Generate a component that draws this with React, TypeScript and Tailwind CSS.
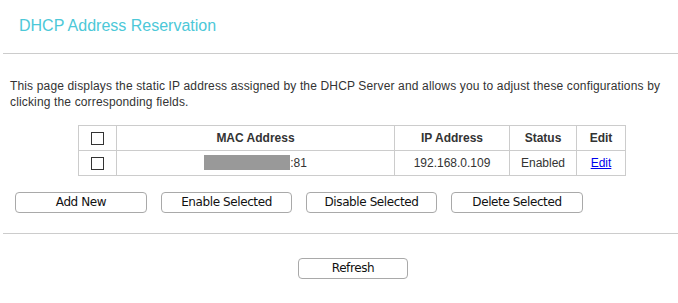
import React from 'react';

const rows = [
  { mac: ':81', ip: '192.168.0.109', status: 'Enabled' },
];

function CheckBox() {
  return <span className="inline-block w-[13px] h-[13px] border border-[#333333] bg-white align-middle" />;
}

function Btn({ label, w }: { label: string; w: string }) {
  return (
    <button
      className={`${w} h-[21px] rounded-[4px] border border-[#a9a9a9] bg-white text-[12px] leading-[19px] tracking-[-0.4px] text-[#111111] font-['DejaVu_Sans',Tahoma,sans-serif]`}
    >
      {label}
    </button>
  );
}

export default function App() {
  return (
    <div className="w-[678px] h-[303px] bg-white font-['Liberation_Sans',Arial,sans-serif] overflow-hidden">
      {/* Title */}
      <h1 className="pl-[19px] pt-[17px] text-[16px] leading-[18px] text-[#4cc8d8]">DHCP Address Reservation</h1>
      <div className="ml-[3px] mt-[18px] border-t border-[#cccccc]" />

      <p className="mt-[24px] px-[10px] text-[12px] leading-[16px] tracking-[0.15px] text-[#333333]">
        This page displays the static IP address assigned by the DHCP Server and allows you to adjust these configurations by
        clicking the corresponding fields.
      </p>

      {/* Reservation table */}
      <table className="ml-[78px] mt-[15px] w-[547px] table-fixed border-collapse text-[12px] text-[#333333]">
        <colgroup>
          <col className="w-[38px]" />
          <col className="w-[278px]" />
          <col className="w-[115px]" />
          <col className="w-[67px]" />
          <col className="w-[49px]" />
        </colgroup>
        <thead>
          <tr className="h-[25px]">
            <th className="border border-[#cccccc] p-0 text-center"><CheckBox /></th>
            <th className="border border-[#cccccc] p-0 text-center font-bold">MAC Address</th>
            <th className="border border-[#cccccc] p-0 text-center font-bold">IP Address</th>
            <th className="border border-[#cccccc] p-0 text-center font-bold">Status</th>
            <th className="border border-[#cccccc] p-0 text-center font-bold">Edit</th>
          </tr>
        </thead>
        <tbody>
          {rows.map((r) => (
            <tr key={r.ip} className="h-[25px]">
              <td className="border border-[#cccccc] p-0 text-center"><CheckBox /></td>
              <td className="border border-[#cccccc] p-0 text-center">
                <span className="inline-block w-[86px] h-[15px] bg-[#999999] align-middle -mt-[2px]" />
                <span>{r.mac}</span>
              </td>
              <td className="border border-[#cccccc] p-0 text-center">{r.ip}</td>
              <td className="border border-[#cccccc] p-0 text-center">{r.status}</td>
              <td className="border border-[#cccccc] p-0 text-center">
                <a href="#" className="text-[#0000ee] underline">Edit</a>
              </td>
            </tr>
          ))}
        </tbody>
      </table>

      {/* Actions */}
      <div className="ml-[15px] mt-[16px] flex gap-[14px]">
        <Btn label="Add New" w="w-[132px]" />
        <Btn label="Enable Selected" w="w-[131px]" />
        <Btn label="Disable Selected" w="w-[131px]" />
        <Btn label="Delete Selected" w="w-[132px]" />
      </div>

      <div className="ml-[3px] mt-[20px] border-t border-[#cccccc]" />

      <div className="ml-[298px] mt-[24px] flex">
        <Btn label="Refresh" w="w-[110px]" />
      </div>
    </div>
  );
}
